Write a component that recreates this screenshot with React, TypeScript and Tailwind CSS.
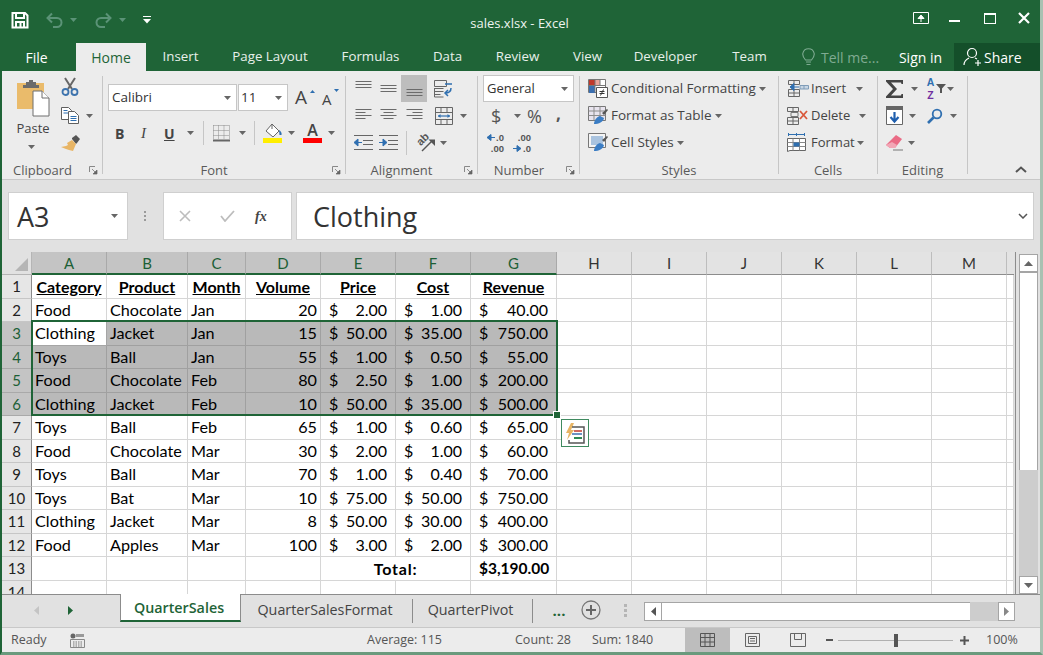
import React from "react";

const Tri = ({ c = "#666", className = "" }: { c?: string; className?: string }) => (
  <svg width="7" height="4" viewBox="0 0 7 4" className={"shrink-0 " + className}><path d="M0 0h7L3.5 4z" fill={c} /></svg>
);

const Launcher = () => (
  <svg width="9" height="9" viewBox="0 0 9 9" className="shrink-0">
    <path d="M.5 6V.5H6" fill="none" stroke="#888" />
    <path d="M3 3l4 4M8 4v4H4z" fill="#666" stroke="#666" strokeWidth=".7" />
  </svg>
);

const Save = () => (
  <svg width="18" height="18" viewBox="0 0 18 18" fill="none" stroke="#fff" strokeWidth="2">
    <path d="M2 2h12l2.5 2.5V16.500H1.500V2z" />
    <path d="M5 2v5h8V2M5 16.500V11h8v5.500" />
    <path d="M9.500 12v4" strokeWidth="2" />
  </svg>
);

const Undo = ({ flip = false }: { flip?: boolean }) => (
  <svg width="17" height="16" viewBox="0 0 17 16" fill="none" stroke="#5b9377" strokeWidth="2" style={flip ? { transform: "scaleX(-1)" } : undefined}>
    <path d="M2 6h9a4.500 4.500 0 0 1 0 9H7" />
    <path d="M6 1.500L1.500 6 6 10.500" />
  </svg>
);

const PasteIcon = () => (
  <svg width="35" height="38" viewBox="0 0 35 38">
    <path d="M1 4h27v26H1z" fill="#eabb6b" />
    <path d="M10 3h3V1h4v2h3v3h3v3H7V6h3z" fill="#6b6b6b" />
    <path d="M17 12h9l7 7v18H17z" fill="#fff" stroke="#6f6f6f" />
    <path d="M26 12v7h7" fill="#fff" stroke="#6f6f6f" />
  </svg>
);

const Scissors = () => (
  <svg width="18" height="19" viewBox="0 0 18 19" fill="none">
    <path d="M4 1l7 11M14 1L7 12" stroke="#666" strokeWidth="2" />
    <circle cx="4.500" cy="15" r="3" stroke="#3d73ad" strokeWidth="1.800" />
    <circle cx="13.500" cy="15" r="3" stroke="#3d73ad" strokeWidth="1.800" />
  </svg>
);

const CopyIcon = () => (
  <svg width="19" height="17" viewBox="0 0 19 17" fill="#fff" stroke="#5f5f5f">
    <path d="M.5.500h7l3 3v9H.5z" />
    <path d="M2.500 3.500h4M2.500 6h5" stroke="#2f6fb0" />
    <path d="M7.500 4.500h6l4 4v8h-10z" />
    <path d="M9.500 9.500h6M9.500 11.500h6M9.500 13.500h6" stroke="#2f6fb0" />
  </svg>
);

const Painter = () => (
  <svg width="20" height="17" viewBox="0 0 20 17">
    <path d="M11 3l4-3 4 4-3 4-1 1-4-5z" fill="#555" />
    <path d="M11 5l4 4-3 7-4-1-3-1-5-2 5-1 2-1-1-2z" fill="#e8b565" />
  </svg>
);

const BordersIcon = () => (
  <svg width="17" height="17" viewBox="0 0 17 17" fill="none">
    <path d="M.5.500h16M.5 5.500h16M.5 10.500h16M.5.500v13M5.500.500v13M11 .500v13M16.500.500v13" stroke="#8a8a8a" strokeDasharray="1 1" />
    <path d="M0 15.500h17" stroke="#666" strokeWidth="2" />
  </svg>
);

const Bucket = () => (
  <svg width="20" height="20" viewBox="0 0 20 20">
    <path d="M9 1l7 7-6 6-7-6z" fill="#fff" stroke="#666" />
    <path d="M9 1v5" stroke="#666" />
    <path d="M16 7c2 1 3 3 2.500 5h-2z" fill="#2f6fb0" />
    <path d="M0 15h19v5H0z" fill="#ffee00" />
  </svg>
);

const Lines = ({ kind }: { kind: "top" | "mid" | "bot" | "l" | "c" | "r" }) => {
  const d = {
    top: "M0 1.500h16M0 4.500h16M0 7.500h16",
    mid: "M0 5.500h16M0 8.500h16M0 11.500h16",
    bot: "M0 9.500h16M0 12.500h16M0 15.500h16",
    l: "M0 2.500h16M0 5.500h10M0 8.500h16M0 11.500h10",
    c: "M0 2.500h16M3 5.500h10M0 8.500h16M3 11.500h10",
    r: "M0 2.500h16M6 5.500h10M0 8.500h16M6 11.500h10",
  }[kind];
  return <svg width="17" height="17" viewBox="0 0 16 17"><path d={d} stroke="#6b6b6b" fill="none" /></svg>;
};

const Wrap = () => (
  <svg width="19" height="18" viewBox="0 0 19 18" fill="none">
    <path d="M.5.500h12v6H.5zM.5 8.500h9M.5 11.500h9M.5 14.500h6" stroke="#666" />
    <path d="M.5 8v9h9" stroke="#666" />
    <path d="M11 4h7M17 8c0 4-2 5-6 5M14 10l-3 3 3 3" stroke="#2f6fb0" strokeWidth="1.500" />
  </svg>
);

const Merge = () => (
  <svg width="18" height="18" viewBox="0 0 18 18" fill="none">
    <path d="M.5.500h17v17H.5zM.5 5.500h17M.5 12.500h17M6 .500v5M12 .500v5M6 12.500v5M12 12.500v5" stroke="#666" />
    <path d="M3 9h12" stroke="#2f6fb0" strokeWidth="1.200" />
    <path d="M3 9l2.500-2v4zM15 9l-2.500-2v4z" fill="#2f6fb0" />
  </svg>
);

const Indent = ({ flip = false }: { flip?: boolean }) => (
  <svg width="19" height="15" viewBox="0 0 19 15" fill="none">
    <path d="M0 .500h19M0 14.500h19M9 5.500h10M9 9.500h10" stroke="#666" />
    <path d={flip ? "M0 7.500h5M4 4l4 3.500L4 11z" : "M8 7.500H3M4 4L0 7.500 4 11z"} stroke="#2f6fb0" fill="#2f6fb0" />
  </svg>
);

const Orient = () => (
  <div className="relative w-[22px] h-[20px]">
    <span className="absolute left-[1px] top-[0px] -rotate-45 text-[11px] leading-[12px] font-bold text-[#555] font-['Liberation_Sans']">ab</span>
    <svg width="22" height="20" viewBox="0 0 22 20" fill="none">
      <path d="M7 18L17 8" stroke="#555" strokeWidth="1.400" />
      <path d="M13.500 6.500H20V13z" fill="#555" />
    </svg>
  </div>
);

const DecInc = ({ inc = false }: { inc?: boolean }) => (
  <div className="relative w-[18px] font-['Liberation_Sans'] text-[9.500px] leading-[11px] font-bold text-[#555] text-right">
    <div>{inc ? ".00" : ".0"}</div>
    <div>{inc ? ".0" : ".00"}</div>
    <svg width="9" height="7" viewBox="0 0 9 7" className={"absolute left-[0px] " + (inc ? "top-[13px]" : "top-[2px]")}>
      <path d={inc ? "M0 3.500h6M4 .500l4 3-4 3z" : "M9 3.500H3M5 .500l-4 3 4 3z"} stroke="#2f6fb0" fill="#2f6fb0" />
    </svg>
  </div>
);

const CondFmt = () => (
  <svg width="20" height="19" viewBox="0 0 20 19" fill="none">
    <path d="M.5.500h17v13H.5z" fill="#fff" stroke="#777" />
    <path d="M1 1h6v5H1z" fill="#c0392b" />
    <path d="M1 7h6v7H1z" fill="#3b6fb0" />
    <path d="M7 1h5v5H7z" fill="#e8a49a" />
    <path d="M7 .500v13M12 .500v6M.5 6.500h17" stroke="#777" />
    <path d="M8.500 8.500h11v10h-11z" fill="#fff" stroke="#555" />
    <path d="M11.500 12.500h5M11.500 14.500h5M15.500 10.500l-3 6" stroke="#333" />
  </svg>
);

const TableFmt = ({ style = false }: { style?: boolean }) => (
  <svg width="20" height="19" viewBox="0 0 20 19" fill="none">
    <path d="M.5.500h17v14H.5z" fill={style ? "#f4f4f4" : "#e8e4ee"} stroke="#777" />
    {style ? <path d="M3 3h12v9H3z" fill="#a9c3df" /> : <path d="M.5 5h17M.5 9.500h17M6 .500v14M12 .500v14" stroke="#8c8c8c" />}
    <path d="M14 7l5-4 1 1-4 5z" fill="#555" />
    <path d="M6 18c0-3 2-7 6-8l4 2c-1 4-5 6-10 6z" fill="#3b7dc4" />
  </svg>
);

const InsertIcon = () => (
  <svg width="22" height="17" viewBox="0 0 22 17" fill="none">
    <path d="M1.500 9.500h11v7h-11zM7 9.500v7M1.500 13h11M1.500.500h11v4h-11zM7 .500v4" stroke="#666" />
    <path d="M13 5.500h8.500v3.500H13zM17 5.500v3.500" stroke="#7f9cb8" fill="#c8d6e4" />
    <path d="M12 7H4M7 3.500L3 7l4 3.500z" stroke="#2f6fb0" fill="#2f6fb0" />
  </svg>
);

const DeleteIcon = () => (
  <svg width="21" height="18" viewBox="0 0 21 18" fill="none">
    <path d="M.5 10.500h11v7H.5zM6 10.500v7M.5 14h11M.5.500h11v4H.5zM6 .500v4" stroke="#666" />
    <path d="M13 4l7 8M20 4l-7 8" stroke="#d9583b" strokeWidth="1.800" />
    <path d="M4 5.500h7v4H4z" stroke="#777" />
  </svg>
);

const FormatIcon = () => (
  <svg width="20" height="20" viewBox="0 0 20 20" fill="none">
    <path d="M1 1.500h17" stroke="#2f6fb0" />
    <path d="M1.500 0v3M17.500 0v3M9.500 0v3" stroke="#2f6fb0" />
    <path d="M.5 5.500h18v12H3l-2.500 1z" stroke="#666" fill="#fff" />
    <path d="M.5 9.500h18M.5 13.500h18M6 5.500v12M12.500 5.500v12" stroke="#888" />
    <path d="M6.500 9.500h6v4h-6z" fill="#2f6fb0" />
  </svg>
);

const Sigma = () => (
  <svg width="18" height="18" viewBox="0 0 18 18"><path d="M0 0h17v4h-1.500l-.5-1.500H5l6 6.500-6 6.500h10l.5-1.500H17v4H0v-1.500L7 9 0 1.500z" fill="#444" /></svg>
);

const FillDown = () => (
  <svg width="17" height="19" viewBox="0 0 17 19">
    <path d="M.5.500h16v18H.5z" fill="#fff" stroke="#666" />
    <path d="M0 0h17v4H0z" fill="#666" />
    <path d="M8.500 6v9M4.500 11l4 4.500 4-4.500" stroke="#1f5fae" strokeWidth="2.200" fill="none" />
  </svg>
);

const SortIcon = () => (
  <div className="flex items-center w-[20px]">
    <div className="w-[9px] font-['Liberation_Sans'] text-[10.500px] leading-[12.500px] font-bold text-center">
      <div className="text-[#2f6fb0]">A</div>
      <div className="text-[#7030a0]">Z</div>
    </div>
    <svg width="10" height="9" viewBox="0 0 10 9" className="ml-[1px]"><path d="M0 0h10L6 4.500V9H4V4.500z" fill="#555" /></svg>
  </div>
);

const Find = () => (
  <svg width="16" height="16" viewBox="0 0 16 16" fill="none">
    <circle cx="10" cy="6" r="4.300" stroke="#2f6fb0" strokeWidth="1.800" />
    <path d="M6.500 9.500L1 15" stroke="#2f6fb0" strokeWidth="2.600" />
  </svg>
);

const Eraser = () => (
  <svg width="17" height="16" viewBox="0 0 17 16">
    <path d="M10 0l6 4-7 9H4L0 10z" fill="#ea6b85" />
    <path d="M0 10l4 3h5l2-3-5-3z" fill="#f2a6b5" />
    <path d="M7 15h10" stroke="#777" />
  </svg>
);

const Row = ({ children, className = "" }: { children: React.ReactNode; className?: string }) => (
  <div className={"flex items-center h-[27px] " + className}>{children}</div>
);

const Group = ({ w, label, launcher, children, labelPad }: { w: string; label: string; launcher?: boolean; children: React.ReactNode; labelPad?: string }) => (
  <div className={"flex flex-col shrink-0 h-[98px] border-r border-[#c6c6c6] " + w}>
    <div className="h-[92px] shrink-0 -mt-[1px]">{children}</div>
    <div className="h-[7px] min-h-0 flex items-center text-[13px] text-[#5a5a5a] leading-none">
      <span className={"flex-1 text-center " + (labelPad ?? "")}>{label}</span>
      {launcher && <span className="pr-[4px] flex items-center"><Launcher /></span>}
    </div>
  </div>
);

const tabs: [string, string][] = [
  ["Insert", "w-[69px]"],
  ["Page Layout", "w-[110px]"],
  ["Formulas", "w-[91px]"],
  ["Data", "w-[63px]"],
  ["Review", "w-[77px]"],
  ["View", "w-[63px]"],
  ["Developer", "w-[93px]"],
  ["Team", "w-[75px]"],
];

type Acc = { s: string };
const money = (v: string): Acc => ({ s: v });
const rows: (string | number | Acc)[][] = [
  ["Food", "Chocolate", "Jan", 20, money("2.00"), money("1.00"), money("40.00")],
  ["Clothing", "Jacket", "Jan", 15, money("50.00"), money("35.00"), money("750.00")],
  ["Toys", "Ball", "Jan", 55, money("1.00"), money("0.50"), money("55.00")],
  ["Food", "Chocolate", "Feb", 80, money("2.50"), money("1.00"), money("200.00")],
  ["Clothing", "Jacket", "Feb", 10, money("50.00"), money("35.00"), money("500.00")],
  ["Toys", "Ball", "Feb", 65, money("1.00"), money("0.60"), money("65.00")],
  ["Food", "Chocolate", "Mar", 30, money("2.00"), money("1.00"), money("60.00")],
  ["Toys", "Ball", "Mar", 70, money("1.00"), money("0.40"), money("70.00")],
  ["Toys", "Bat", "Mar", 10, money("75.00"), money("50.00"), money("750.00")],
  ["Clothing", "Jacket", "Mar", 8, money("50.00"), money("30.00"), money("400.00")],
  ["Food", "Apples", "Mar", 100, money("3.00"), money("2.00"), money("300.00")],
];

const HeadCell = ({ t, sel }: { t: string; sel: boolean }) => (
  <div className={"flex items-center justify-center pt-[1px] text-[15px] border-r " + (sel ? "bg-[#c4c4c4] border-[#a9a9a9] text-[#1c5f36] border-b-2 border-b-[#1f6437]" : "bg-[#e3e3e3] border-[#bdbdbd] text-[#333] border-b border-b-[#8c8c8c]")}>{t}</div>
);

const RowHead = ({ n, sel }: { n: number; sel: boolean }) => (
  <div className={"flex items-center justify-center text-[15px] border-b border-r " + (sel ? "bg-[#c4c4c4] border-[#a9a9a9] text-[#1c5f36]" : "bg-[#e6e6e6] border-b-[#c6c6c6] border-r-[#8c8c8c] text-[#222]")}>{n}</div>
);

const Cell = ({ sel, active, children, right }: { sel: boolean; active?: boolean; children?: React.ReactNode; right?: boolean }) => (
  <div className={"flex items-center overflow-visible whitespace-nowrap text-[16.200px] text-black border-r border-b px-[3px] " + (right ? "justify-end " : "") + (active ? "bg-white border-[#a5a5a5]" : sel ? "bg-[#b9b9b9] border-[#a0a0a0]" : "bg-white border-[#d6d6d6]")}>{children}</div>
);

const AccCell = ({ sel, v }: { sel: boolean; v: string }) => (
  <div className={"flex items-center justify-between text-[16px] text-black border-r border-b pl-[8px] pr-[8px] " + (sel ? "bg-[#b9b9b9] border-[#a0a0a0]" : "bg-white border-[#d6d6d6]")}>
    <span>$</span><span>{v}</span>
  </div>
);

const Bold = ({ t }: { t: string }) => (
  <div className="flex items-center justify-center pt-[1px] text-[16px] font-bold underline text-black bg-white border-r border-b border-[#d6d6d6] whitespace-nowrap">{t}</div>
);

const Blank = ({ n }: { n: number }) => (
  <>
    {Array.from({ length: n }).map((_, i) => (
      <div key={i} className="bg-white border-r border-b border-[#d6d6d6]" />
    ))}
  </>
);

export default function App() {
  return (
    <div className="w-[1043px] h-[655px] overflow-hidden flex flex-col border-l-2 border-l-[#1f6437] border-r-[3px] border-r-[#a9c1b2] border-b-[3px] border-b-[#6a9a7d] bg-[#e1e1e1] font-['Open_Sans',sans-serif] text-[#444]">
      {/* Title bar */}
      <div className="h-[43px] shrink-0 bg-[#1f6437] flex items-center text-white">
        <div className="w-[430px] flex items-center pl-[9px] pb-[4px]">
          <Save />
          <div className="ml-[17px]"><Undo /></div>
          <Tri c="#5b9377" className="ml-[7px]" />
          <div className="ml-[18px]"><Undo flip /></div>
          <Tri c="#5b9377" className="ml-[7px]" />
          <svg width="8" height="8" viewBox="0 0 8 8" className="ml-[17px]"><path d="M0 .500h8" stroke="#fff" /><path d="M0 3h8L4 7.500z" fill="#fff" /></svg>
        </div>
        <div className="w-[175px] text-center text-[13px] leading-none pt-[4px] text-[#eef4f0]">sales.xlsx - Excel</div>
        <div className="flex-1 flex items-center justify-end pr-[10px] pb-[7px]">
          <svg width="16" height="12" viewBox="0 0 16 12" fill="none"><path d="M.5.500h15v11H.5z" stroke="#fff" /><path d="M8 10V4M5 6.500L8 3l3 3.500z" stroke="#fff" fill="#fff" /></svg>
          <div className="ml-[20px] w-[11px] h-[2px] bg-white mt-[6px]" />
          <div className="ml-[24px] w-[12px] h-[11px] border border-white border-t-2" />
          <svg width="12" height="12" viewBox="0 0 12 12" className="ml-[22px]"><path d="M1 1l10 10M11 1L1 11" stroke="#fff" strokeWidth="2.200" /></svg>
        </div>
      </div>
      {/* Tabs */}
      <div className="h-[28px] shrink-0 bg-[#1f6437] flex items-center text-white text-[14px]">
        <div className="w-[69px] text-center">File</div>
        <div className="w-[5px]" />
        <div className="w-[70px] h-full bg-[#ececec] text-[#1f6437] flex items-center justify-center">Home</div>
        {tabs.map(([t, w]) => (
          <div key={t} className={"text-center text-[13.300px] text-[#e8f0eb] " + w}>{t}</div>
        ))}
        <div className="w-[108px] flex items-center pl-[15px] text-[#7fab92]">
          <svg width="13" height="18" viewBox="0 0 13 18" fill="none" stroke="#7fab92" strokeWidth="1.100"><path d="M3.500 12C1 9 .5 7.500 .8 5.500 1.500 2 4 .8 6.500.8S11.500 2 12.200 5.500c.3 2-.2 3.500-2.700 6.500zM4 14h5M4.500 16.500h4" /></svg>
          <span className="ml-[6px] whitespace-nowrap">Tell me...</span>
        </div>
        <div className="w-[51px] text-center whitespace-nowrap">Sign in</div>
        <div className="ml-[8px] flex-1 h-full bg-[#144f2a] flex items-center pl-[9px]">
          <svg width="20" height="20" viewBox="0 0 20 20" fill="none" stroke="#fff" strokeWidth="1.200"><circle cx="9" cy="6" r="4.500" /><path d="M1 18c0-4 3-6 5-7M12 11l2 1M15 13v6M12 16h6" /></svg>
          <span className="ml-[1px]">Share</span>
        </div>
      </div>
      {/* Ribbon */}
      <div className="h-[109px] shrink-0 bg-[#ececec] border-b border-[#c8c8c8] flex pt-[5px]">
        <Group w="w-[101px]" label="Clipboard" launcher labelPad="pr-[6px]">
          <div className="flex">
            <div className="w-[56px] pl-[13px] flex flex-col items-start">
              <div className="mt-[4px] ml-[1px]"><PasteIcon /></div>
              <div className="mt-[2px] text-[13px] leading-[18px] w-[36px] text-center text-[#444]">Paste</div>
              <div className="mt-[8px] ml-[13px]"><Tri /></div>
            </div>
            <div className="flex flex-col pl-[3px]">
              <div className="mt-[2px]"><Scissors /></div>
              <div className="mt-[11px] flex items-center"><CopyIcon /><Tri className="ml-[6px]" /></div>
              <div className="mt-[11px]"><Painter /></div>
            </div>
          </div>
        </Group>
        <Group w="w-[243px]" label="Font" launcher labelPad="pr-[7px]">
          <div className="flex items-center pt-[9px] pl-[5px]">
            <div className="w-[129px] h-[27px] bg-white border border-[#c6c6c6] flex items-center justify-between px-[3px] text-[13.500px] pr-[5px] text-[#333]"><span>Calibri</span><Tri /></div>
            <div className="ml-[1px] w-[50px] h-[27px] bg-white border border-[#c6c6c6] flex items-center justify-between px-[2px] text-[13.500px] pr-[5px] text-[#333]"><span>11</span><Tri /></div>
            <div className="ml-[7px] w-[17px] text-[19px] leading-none text-[#444] relative">A<svg width="5" height="3" viewBox="0 0 5 3" className="absolute right-[-3px] top-[2px]"><path d="M0 3h5L2.500 0z" fill="#2f6fb0" /></svg></div>
            <div className="ml-[10px] w-[14px] text-[15px] leading-none text-[#444] relative pt-[3px]">A<svg width="5" height="3" viewBox="0 0 5 3" className="absolute right-[-3px] top-[0px]"><path d="M0 0h5L2.500 3z" fill="#2f6fb0" /></svg></div>
          </div>
          <div className="flex items-center mt-[10px] h-[24px] pl-[12px]">
            <span className="font-bold text-[14px] w-[9px] text-[#444]">B</span>
            <span className="ml-[17px] italic text-[15px] w-[8px] text-[#444] font-['Liberation_Serif']">I</span>
            <span className="ml-[15px] font-bold text-[14px] w-[11px] text-[#444] underline">U</span>
            <Tri className="ml-[12px]" />
            <div className="ml-[9px] w-px h-[24px] bg-[#c6c6c6]" />
            <div className="ml-[9px]"><BordersIcon /></div>
            <Tri className="ml-[9px]" />
            <div className="ml-[8px] w-px h-[24px] bg-[#c6c6c6]" />
            <div className="ml-[8px]"><Bucket /></div>
            <Tri className="ml-[5px]" />
            <div className="ml-[8px] w-[19px] flex flex-col items-center">
              <span className="text-[16px] leading-[15px] font-semibold text-[#444]">A</span>
              <div className="w-[19px] h-[5px] bg-[#ff0000]" />
            </div>
            <Tri className="ml-[6px]" />
          </div>
        </Group>
        <Group w="w-[132px]" label="Alignment" launcher labelPad="pr-[7px]">
          <div className="flex items-center h-[27px] pl-[9px]">
            <div className="w-[25px]"><Lines kind="top" /></div>
            <div className="w-[21px]"><Lines kind="mid" /></div>
            <div className="w-[26px] h-[27px] bg-[#bdbdbd] flex items-center justify-center"><Lines kind="bot" /></div>
            <div className="ml-[7px]"><Wrap /></div>
          </div>
          <div className="flex items-center h-[27px] pl-[9px]">
            <div className="w-[25px]"><Lines kind="l" /></div>
            <div className="w-[26px]"><Lines kind="c" /></div>
            <div className="w-[25px]"><Lines kind="r" /></div>
            <div className="ml-[4px]"><Merge /></div>
            <Tri className="ml-[7px]" />
          </div>
          <div className="flex items-center h-[27px] pl-[8px]">
            <div className="w-[25px]"><Indent /></div>
            <div className="w-[27px]"><Indent flip /></div>
            <div className="w-px h-[24px] bg-[#c6c6c6]" />
            <div className="ml-[8px]"><Orient /></div>
            <Tri className="ml-[3px]" />
          </div>
        </Group>
        <Group w="w-[102px]" label="Number" launcher labelPad="pr-[6px]">
          <div className="pl-[5px]">
            <div className="w-[91px] h-[27px] bg-white border border-[#c6c6c6] flex items-center justify-between pl-[3px] pr-[5px] text-[13px] text-[#333]"><span>General</span><Tri /></div>
            <div className="flex items-center h-[27px] pl-[8px] text-[#555]">
              <span className="text-[18px] w-[14px] leading-none">$</span>
              <Tri className="ml-[9px]" />
              <span className="ml-[6px] text-[18px] w-[24px] leading-none">%</span>
              <span className="ml-[5px] text-[17px] font-bold leading-none pb-[5px]">,</span>
            </div>
            <div className="flex items-center h-[27px] pl-[3px]">
              <DecInc />
              <div className="ml-[9px]"><DecInc inc /></div>
            </div>
          </div>
        </Group>
        <Group w="w-[199px]" label="Styles">
          <div className="pl-[8px] text-[13.500px] text-[#444]">
            <Row><CondFmt /><span className="ml-[3px] whitespace-nowrap">Conditional Formatting</span><Tri className="ml-[3px]" /></Row>
            <Row><TableFmt /><span className="ml-[3px] whitespace-nowrap">Format as Table</span><Tri className="ml-[3px]" /></Row>
            <Row><TableFmt style /><span className="ml-[3px] whitespace-nowrap">Cell Styles</span><Tri className="ml-[3px]" /></Row>
          </div>
        </Group>
        <Group w="w-[99px]" label="Cells">
          <div className="pl-[8px] text-[13px] text-[#444]">
            <Row><InsertIcon /><span className="ml-[2px] w-[45px]">Insert</span><Tri /></Row>
            <Row><DeleteIcon /><span className="ml-[3px] w-[48px]">Delete</span><Tri /></Row>
            <Row><FormatIcon /><span className="ml-[4px] w-[46px]">Format</span><Tri /></Row>
          </div>
        </Group>
        <Group w="w-[90px]" label="Editing">
          <div className="pl-[8px]">
            <Row><Sigma /><Tri className="ml-[7px]" /><div className="ml-[8px]"><SortIcon /></div><Tri className="ml-[1px]" /></Row>
            <Row><FillDown /><Tri className="ml-[6px]" /><div className="ml-[11px]"><Find /></div><Tri className="ml-[7px]" /></Row>
            <Row><Eraser /><Tri className="ml-[5px]" /></Row>
          </div>
        </Group>
        <div className="flex-1 flex justify-end items-end pr-[13px] pb-[6px]">
          <svg width="12" height="7" viewBox="0 0 12 7" fill="none"><path d="M1 6l5-4.500L11 6" stroke="#555" strokeWidth="2" /></svg>
        </div>
      </div>
      {/* Formula bar */}
      <div className="h-[72px] shrink-0 flex items-center bg-[#e1e1e1] pl-[6px] pr-[6px]">
        <div className="w-[120px] h-[48px] bg-white border border-[#cfcfcf] flex items-center justify-between pl-[8px] pr-[9px] text-[27px] text-[#333]"><span className="pt-[2px]">A3</span><Tri /></div>
        <div className="w-[35px] flex justify-center">
          <svg width="3" height="11" viewBox="0 0 3 11"><path d="M0 0h2v2H0zM0 4h2v2H0zM0 8h2v2H0z" fill="#9a9a9a" /></svg>
        </div>
        <div className="w-[129px] h-[48px] bg-white border border-[#cfcfcf] flex items-center">
          <svg width="12" height="12" viewBox="0 0 12 12" className="ml-[15px]"><path d="M1 1l10 10M11 1L1 11" stroke="#bdbdbd" strokeWidth="1.600" /></svg>
          <svg width="15" height="12" viewBox="0 0 15 12" className="ml-[29px]" fill="none"><path d="M1 6l4 5L14 1" stroke="#bdbdbd" strokeWidth="1.800" /></svg>
          <span className="ml-[20px] font-['Liberation_Serif'] italic text-[14px] text-[#444] font-semibold">fx</span>
        </div>
        <div className="ml-[4px] flex-1 h-[48px] bg-white border border-[#cfcfcf] flex items-center justify-between pl-[16px] pr-[5px] text-[27px] text-[#333]">
          <span className="pt-[2px]">Clothing</span>
          <svg width="10" height="6" viewBox="0 0 10 6" fill="none"><path d="M1 1l4 4 4-4" stroke="#555" strokeWidth="1.500" /></svg>
        </div>
      </div>
      {/* Sheet */}
      <div className="h-[342px] shrink-0 flex bg-[#e1e1e1]">
        <div className="relative w-[1014px] h-[342px] overflow-hidden border-r border-[#8c8c8c] font-['Lato',sans-serif]">
          <div className="grid grid-cols-[30px_75px_81px_58px_75px_75px_75px_86px_75px_75px_75px_75px_75px_75px_7px] grid-rows-[23px_repeat(14,23.500px)]">
            <div className="bg-[#e1e1e1] border-r border-b border-[#b5b5b5] flex items-end justify-end pr-[3px] pb-[3px]">
              <svg width="13" height="13" viewBox="0 0 13 13"><path d="M13 0v13H0z" fill="#b5b5b5" /></svg>
            </div>
            {"ABCDEFG".split("").map((c) => <HeadCell key={c} t={c} sel />)}
            {"HIJKLM".split("").map((c) => <HeadCell key={c} t={c} sel={false} />)}
            <div className="bg-[#e3e3e3] border-b border-[#8c8c8c]" />

            <RowHead n={1} sel={false} />
            {["Category", "Product", "Month", "Volume", "Price", "Cost", "Revenue"].map((t) => <Bold key={t} t={t} />)}
            <Blank n={7} />

            {rows.map((r, i) => {
              const n = i + 2;
              const sel = n >= 3 && n <= 6;
              return (
                <React.Fragment key={n}>
                  <RowHead n={n} sel={sel} />
                  {r.map((v, j) =>
                    typeof v === "object" ? (
                      <AccCell key={j} sel={sel} v={v.s} />
                    ) : (
                      <Cell key={j} sel={sel} active={n === 3 && j === 0} right={typeof v === "number"}>{v}</Cell>
                    )
                  )}
                  <Blank n={7} />
                </React.Fragment>
              );
            })}

            <RowHead n={13} sel={false} />
            <Blank n={4} />
            <div className="col-span-2 flex items-center justify-center pt-[1px] bg-white border-r border-b border-[#d6d6d6] text-[16px] tracking-[0.8px] font-bold text-black">Total:</div>
            <div className="flex items-center justify-between pt-[1px] bg-white border-r border-b border-[#d6d6d6] text-[15.500px] font-bold text-black pl-[8px] pr-[8px]"><span>$</span><span>3,190.00</span></div>
            <Blank n={7} />

            <RowHead n={14} sel={false} />
            <Blank n={14} />
          </div>
          {/* Selection overlay */}
          <div className="absolute left-[29px] top-[68px] w-[527px] h-[96px] border-2 border-[#1f6437] pointer-events-none" />
          <div className="absolute left-[552px] top-[160px] w-[6px] h-[6px] bg-[#1f6437] outline outline-1 outline-white" />
          <div className="absolute left-[559px] top-[167px] w-[28px] h-[28px] bg-white border border-[#3f8a5f] flex items-center justify-center">
            <svg width="20" height="21" viewBox="0 0 20 21">
              <path d="M6 0L1 10h3l-2 7 7-10H6l3-7z" fill="#e8b565" />
              <path d="M7 4h12v16H4v-3" fill="none" stroke="#555" strokeWidth="1.500" />
              <path d="M9 8h8" stroke="#c0392b" strokeWidth="1.500" />
              <path d="M7 11h10" stroke="#3b6fb0" strokeWidth="1.500" />
              <path d="M9 15h8" stroke="#2f8a55" strokeWidth="2" />
            </svg>
          </div>
        </div>
        {/* Vertical scrollbar */}
        <div className="ml-[3px] w-[19px] flex flex-col pt-[2px]">
          <div className="h-[18px] bg-white border border-[#a5a5a5] flex items-center justify-center">
            <svg width="9" height="5" viewBox="0 0 9 5"><path d="M0 5h9L4.500 0z" fill="#666" /></svg>
          </div>
          <div className="h-[198px] bg-white border-x border-[#a5a5a5] border-t border-t-[#a5a5a5]" />
          <div className="flex-1 bg-[#cdcdcd]" />
          <div className="h-[18px] bg-white border border-[#a5a5a5] flex items-center justify-center">
            <svg width="9" height="5" viewBox="0 0 9 5"><path d="M0 0h9L4.500 5z" fill="#666" /></svg>
          </div>
        </div>
      </div>
      {/* Sheet tabs */}
      <div className="h-[33px] shrink-0 bg-[#e1e1e1] flex items-start border-t border-[#8c8c8c] text-[14.300px]">
        <div className="w-[118px] h-[31px] flex items-center">
          <svg width="5" height="9" viewBox="0 0 5 9" className="ml-[32px]"><path d="M5 0v9L0 4.500z" fill="#c4c4c4" /></svg>
          <svg width="5" height="9" viewBox="0 0 5 9" className="ml-[29px]"><path d="M0 0v9l5-4.500z" fill="#1f6437" /></svg>
        </div>
        <div className="w-[121px] h-[28px] bg-white border-x border-[#8c8c8c] border-b-2 border-b-[#1f6437] flex items-center justify-center pt-[2px] pr-[3px] font-semibold text-[#1f6437] -mt-px">QuarterSales</div>
        <div className="w-[171px] h-[29px] flex items-center justify-center text-[#444] whitespace-nowrap pr-[3px]">QuarterSalesFormat</div>
        <div className="w-px h-[24px] mt-[4px] bg-[#8c8c8c]" />
        <div className="w-[119px] h-[29px] flex items-center justify-center text-[#444] pr-[4px]">QuarterPivot</div>
        <div className="w-px h-[24px] mt-[4px] bg-[#8c8c8c]" />
        <div className="w-[48px] h-[34px] flex items-center justify-center text-[#1f6437] text-[15px] font-bold pb-[3px] pl-[4px]">...</div>
        <svg width="20" height="20" viewBox="0 0 20 20" fill="none" className="mt-[5px]"><circle cx="10" cy="10" r="9" stroke="#777" strokeWidth="1.300" /><path d="M10 5v10M5 10h10" stroke="#666" strokeWidth="2" /></svg>
        <svg width="3" height="13" viewBox="0 0 3 13" className="ml-[23px] mt-[9px]"><path d="M0 0h3v3H0zM0 5h3v3H0zM0 10h3v3H0z" fill="#b5b5b5" /></svg>
        <div className="ml-[17px] mt-[7px] flex h-[19px] w-[371px]">
          <div className="w-[18px] h-full bg-white border border-[#a5a5a5] flex items-center justify-center"><svg width="5" height="9" viewBox="0 0 5 9"><path d="M5 0v9L0 4.500z" fill="#555" /></svg></div>
          <div className="w-[308px] h-full bg-white border-y border-[#a5a5a5]" />
          <div className="flex-1 bg-[#cdcdcd]" />
          <div className="w-[17px] h-full bg-white border border-[#a5a5a5] flex items-center justify-center"><svg width="5" height="9" viewBox="0 0 5 9"><path d="M0 0v9l5-4.500z" fill="#888" /></svg></div>
        </div>
      </div>
      {/* Status bar */}
      <div className="flex-1 bg-[#ececec] border-t border-[#c8c8c8] flex items-center text-[12.500px] text-[#555] whitespace-nowrap">
        <span className="ml-[9px] w-[59px]">Ready</span>
        <svg width="15" height="15" viewBox="0 0 15 15" fill="none"><circle cx="3" cy="3" r="2.500" fill="#666" /><path d="M6 1h8v3H6z" fill="#999" /><path d="M.5 6.500h14v8H.5z" stroke="#888" /><path d="M3 9h9M3 11h9M3 13h9" stroke="#777" strokeDasharray="1.500 1" /></svg>
        <span className="ml-[282px] w-[148px]">Average: 115</span>
        <span className="w-[77px]">Count: 28</span>
        <span className="w-[93px]">Sum: 1840</span>
        <div className="w-[45px] h-full bg-[#bdbdbd] flex items-center justify-center">
          <svg width="15" height="14" viewBox="0 0 15 14" fill="none"><path d="M.5.500h14v13H.5zM.5 4.500h14M.5 9h14M5 .500v13M10 .500v13" stroke="#555" /></svg>
        </div>
        <div className="w-[45px] flex justify-center">
          <svg width="15" height="14" viewBox="0 0 15 14" fill="none"><path d="M.5.500h14v13H.5zM3.500 3.500h8v7h-8zM5 5.500h5M5 8h5" stroke="#666" /></svg>
        </div>
        <div className="w-[45px] flex justify-center">
          <svg width="16" height="14" viewBox="0 0 16 14" fill="none"><path d="M.5.500h15v13H.5zM4.500.500v6h7v-6" stroke="#666" /></svg>
        </div>
        <div className="ml-[6px] w-[7px] h-[2px] bg-[#555]" />
        <div className="ml-[5px] w-[115px] h-px bg-[#b0b0b0] relative">
          <div className="absolute left-[56px] -top-[6px] w-[4px] h-[13px] bg-[#555]" />
        </div>
        <svg width="9" height="9" viewBox="0 0 9 9" className="ml-[7px]"><path d="M4.500 0v9M0 4.500h9" stroke="#555" strokeWidth="2" /></svg>
        <span className="ml-[17px]">100%</span>
      </div>
    </div>
  );
}
